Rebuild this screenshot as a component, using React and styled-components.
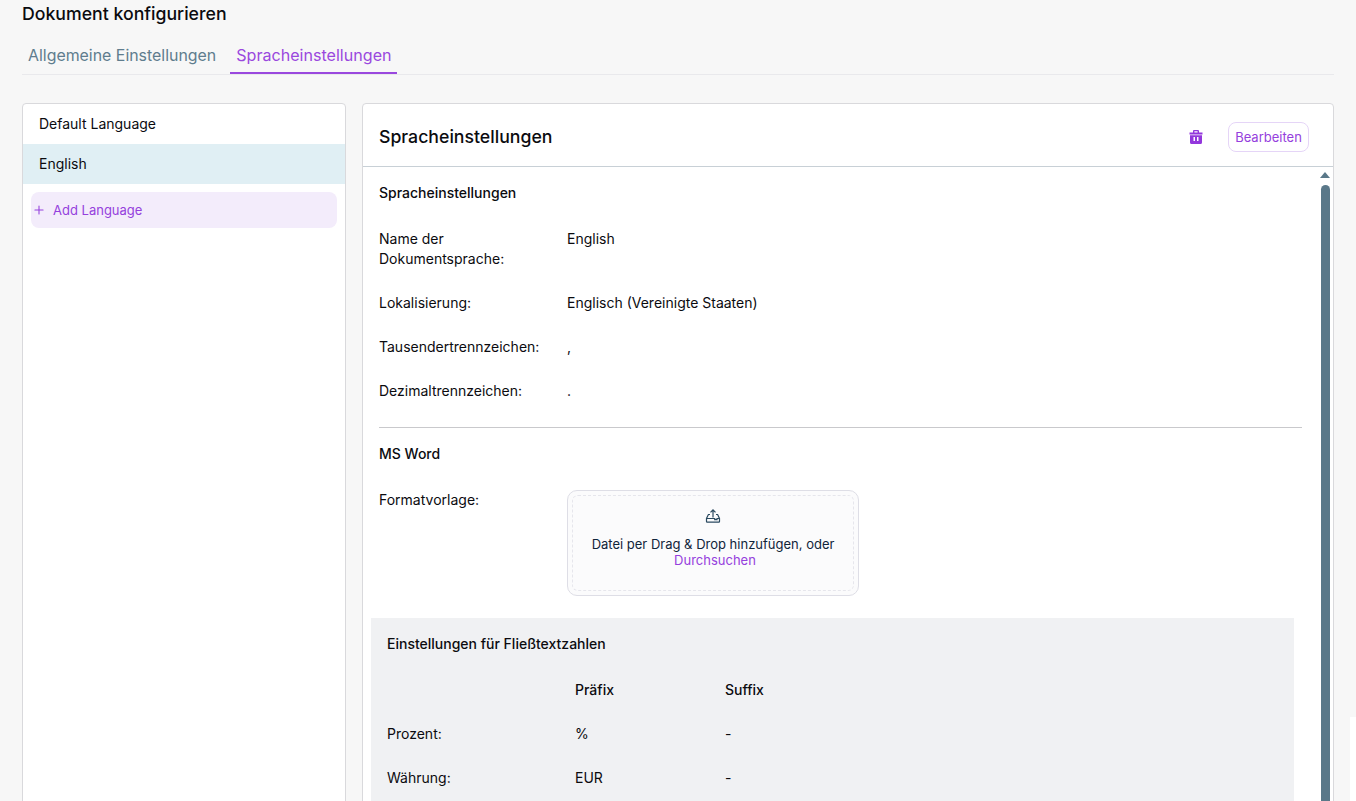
import React from 'react';
import styled, { createGlobalStyle } from 'styled-components';
import { Plus } from 'lucide-react';

const GlobalStyle = createGlobalStyle`
  html, body {
    margin: 0;
    height: 100%;
    overflow: hidden;
    background: #f7f7f7;
    font-family: Inter, "Liberation Sans", sans-serif;
    color: #0b0b0f;
  }
  * { box-sizing: border-box; }
`;

const Page = styled.div`
  height: 801px;
  overflow: hidden;
  padding: 0 22px;
  position: relative;
`;

const Title = styled.h1`
  margin: 0;
  padding-top: 4px;
  font-size: 17.7px;
  line-height: 20px;
  font-weight: 500;
`;

const Tabs = styled.div`
  display: flex;
  width: 1312px;
  height: 51px;
  padding-top: 20px;
  border-bottom: 1px solid #e9e9ec;
  gap: 8px;
`;

const Tab = styled.div`
  height: 30px;
  padding: ${props => props.active ? '0 5px 0 6px' : '1px 6px 0'};
  margin-bottom: -1px;
  font-size: ${props => props.active ? '16.1px' : '15.9px'};
  line-height: 22px;
  color: ${props => props.active ? '#9a48de' : '#5f7d8e'};
  border-bottom: ${props => props.active ? '2px solid #9a48de' : 'none'};
`;

const Columns = styled.div`
  display: flex;
  gap: 16px;
  width: 1312px;
  margin-top: 28px;
`;

const Sidebar = styled.aside`
  width: 324px;
  height: 720px;
  flex: none;
  background: #fff;
  border: 1px solid #d9d9dc;
  border-radius: 4px;
`;

const LangRow = styled.div`
  height: 40px;
  padding-left: 16px;
  font-size: 14px;
  line-height: 40px;
  background: ${props => props.selected ? '#e0eff4' : 'transparent'};
`;

const AddButton = styled.div`
  display: flex;
  align-items: center;
  gap: 7px;
  height: 36px;
  margin: 8px 8px 0;
  padding-left: 1px;
  border-radius: 8px;
  background: #f3ecfb;
  color: #9540dd;
  font-size: 13px;
`;

const Main = styled.section`
  flex: 1;
  height: 720px;
  background: #fff;
  border: 1px solid #d9d9dc;
  border-radius: 4px;
  position: relative;
  overflow: hidden;
`;

const MainHeader = styled.header`
  display: flex;
  align-items: center;
  height: 63px;
  padding: 3px 24px 0 16px;
  border-bottom: 1px solid #c8d0d6;
`;

const MainTitle = styled.h2`
  flex: 1;
  margin: 0;
  font-size: 17.7px;
  font-weight: 500;
`;

const IconButton = styled.button`
  display: flex;
  padding: 0;
  margin-right: 25px;
  border: 0;
  background: none;
`;

const EditButton = styled.button`
  height: 30px;
  width: 81px;
  padding: 0;
  background: #fff;
  border: 1px solid #e5d5f7;
  border-radius: 8px;
  color: #9540dd;
  font: 13px Inter, sans-serif;
`;

const Body = styled.div`
  padding: 16px 31px 0 16px;
`;

const SectionTitle = styled.h3`
  margin: 0;
  font-size: 14px;
  line-height: 20px;
  font-weight: 500;
`;

const FieldRow = styled.div`
  display: flex;
  margin-top: ${props => props.gap || 24}px;
  font-size: 14px;
  line-height: 20px;
`;

const FieldLabel = styled.div`
  width: ${props => props.width || 188}px;
  flex: none;
  padding-right: 40px;
`;

const Divider = styled.hr`
  margin: 26px 0 16px;
  border: 0;
  border-top: 1px solid #c9c9cc;
`;

const Dropzone = styled.div`
  width: 292px;
  height: 106px;
  padding: 4px;
  background: #fbfbfc;
  border: 1px solid #dedee6;
  border-radius: 10px;
`;

const DropInner = styled.div`
  display: flex;
  flex-direction: column;
  align-items: center;
  height: 100%;
  padding-top: 12px;
  border: 1px dashed #e6e6ec;
  border-radius: 6px;
  font-size: 13px;
  line-height: 16px;
  color: #10243a;
  text-align: center;
`;

const DropText = styled.div`
  margin-top: 12px;
`;

const Browse = styled.span`
  display: block;
  padding-left: 4px;
  color: #9540dd;
`;

const NumberBox = styled.div`
  width: 923px;
  height: 200px;
  margin: 22px 0 0 -8px;
  padding: 16px;
  background: #f0f1f3;
`;

const HeadCell = styled.div`
  width: ${props => props.width}px;
  flex: none;
  font-weight: 500;
`;

const Cell = styled.div`
  width: ${props => props.width}px;
  flex: none;
`;

const ScrollArrow = styled.div`
  position: absolute;
  top: 68px;
  right: 3px;
  width: 0;
  height: 0;
  border-left: 5px solid transparent;
  border-right: 5px solid transparent;
  border-bottom: 6px solid #5a7889;
`;

const ScrollThumb = styled.div`
  position: absolute;
  top: 81px;
  bottom: 0;
  right: 3px;
  width: 9px;
  border-radius: 5px 5px 0 0;
  background: #5a7889;
`;

const Corner = styled.div`
  position: absolute;
  top: 717px;
  right: 0;
  width: 6px;
  height: 84px;
  background: #fff;
`;

const TrashIcon = () => (
  <svg width="14" height="14" viewBox="0 0 14 14">
    <path
      fill="#9337dc"
      fillRule="evenodd"
      d="M5 0h4a1 1 0 0 1 1 1v1.500h3.500v2H.5v-2H4V1a1 1 0 0 1 1-1Zm.4 1.200v1.300h3.200V1.200H5.400ZM1 5.200h12v7.300A1.500 1.500 0 0 1 11.500 14h-9A1.500 1.500 0 0 1 1 12.500V5.200Zm3.500 1.800v4h1.500V7H4.500Zm3.500 0v4h1.500V7H8Z"
    />
  </svg>
);

const UploadIcon = () => (
  <svg width="16" height="16" viewBox="0 0 16 16" fill="none" stroke="#2b4a60" strokeWidth="1.200">
    <path d="M8 9.500V2M5.500 4.300 8 1.800l2.500 2.500" />
    <path d="M5 6.500H3.400L1.500 10.500v3a.6.600 0 0 0 .6.600h11.800a.6.600 0 0 0 .6-.6v-3L12.600 6.500H11" />
    <path d="M1.500 10.500h8.200v1.200h2.300v-1.200h2.500" />
  </svg>
);

const App = () => (
  <Page>
    <GlobalStyle />
    <Title>Dokument konfigurieren</Title>
    <Tabs>
      <Tab>Allgemeine Einstellungen</Tab>
      <Tab active>Spracheinstellungen</Tab>
    </Tabs>
    <Columns>
      <Sidebar>
        <LangRow>Default Language</LangRow>
        <LangRow selected>English</LangRow>
        <AddButton>
          <Plus size={14} strokeWidth={1.800} />
          Add Language
        </AddButton>
      </Sidebar>
      <Main>
        <MainHeader>
          <MainTitle>Spracheinstellungen</MainTitle>
          <IconButton><TrashIcon /></IconButton>
          <EditButton>Bearbeiten</EditButton>
        </MainHeader>
        <Body>
          <SectionTitle>Spracheinstellungen</SectionTitle>
          <FieldRow gap={26}>
            <FieldLabel>Name der Dokumentsprache:</FieldLabel>
            <div>English</div>
          </FieldRow>
          <FieldRow>
            <FieldLabel>Lokalisierung:</FieldLabel>
            <div>Englisch (Vereinigte Staaten)</div>
          </FieldRow>
          <FieldRow>
            <FieldLabel>Tausendertrennzeichen:</FieldLabel>
            <div>,</div>
          </FieldRow>
          <FieldRow>
            <FieldLabel>Dezimaltrennzeichen:</FieldLabel>
            <div>.</div>
          </FieldRow>
          <Divider />
          <SectionTitle>MS Word</SectionTitle>
          <FieldRow gap={26}>
            <FieldLabel>Formatvorlage:</FieldLabel>
            <Dropzone>
              <DropInner>
                <UploadIcon />
                <DropText>
                  Datei per Drag &amp; Drop hinzufügen, oder
                  <Browse>Durchsuchen</Browse>
                </DropText>
              </DropInner>
            </Dropzone>
          </FieldRow>
          <NumberBox>
            <SectionTitle>Einstellungen für Fließtextzahlen</SectionTitle>
            <FieldRow gap={26}>
              <Cell width={188} />
              <HeadCell width={150}>Präfix</HeadCell>
              <HeadCell width={150}>Suffix</HeadCell>
            </FieldRow>
            <FieldRow>
              <Cell width={188}>Prozent:</Cell>
              <Cell width={150}>%</Cell>
              <Cell width={150}>-</Cell>
            </FieldRow>
            <FieldRow>
              <Cell width={188}>Währung:</Cell>
              <Cell width={150}>EUR</Cell>
              <Cell width={150}>-</Cell>
            </FieldRow>
          </NumberBox>
        </Body>
        <ScrollArrow />
        <ScrollThumb />
      </Main>
    </Columns>
    <Corner />
  </Page>
);

export default App;
